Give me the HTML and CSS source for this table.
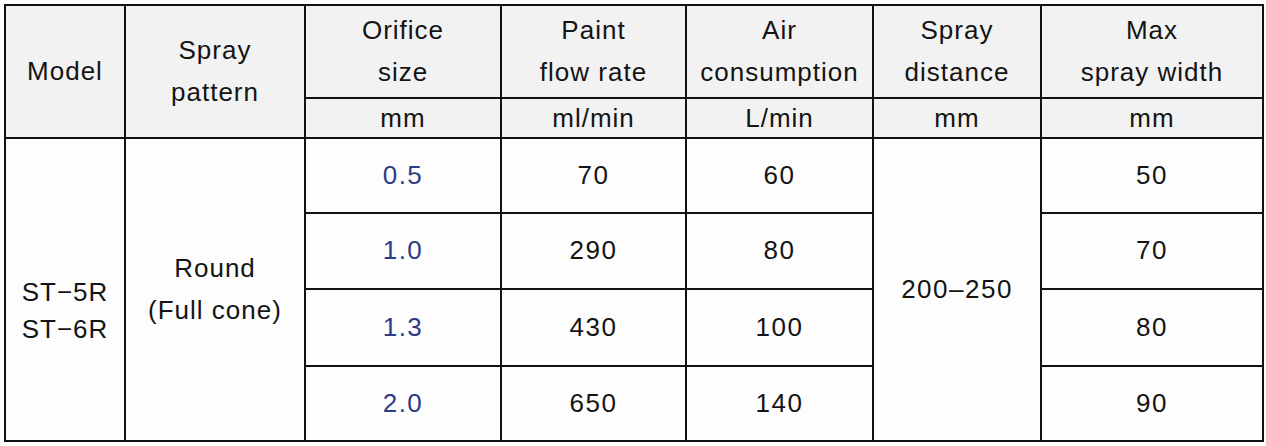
FILE: index.html
```html
<!DOCTYPE html>
<html lang="en">
<head>
<meta charset="utf-8">
<title>Spray nozzle specifications</title>
<link rel="stylesheet" href="styles.css">
</head>
<body>
<div class="wrap">
<table class="spec">
  <colgroup>
    <col class="c-model">
    <col class="c-pattern">
    <col class="c-orifice">
    <col class="c-flow">
    <col class="c-air">
    <col class="c-dist">
    <col class="c-width">
  </colgroup>
  <thead>
    <tr class="h-main">
      <th rowspan="2">Model</th>
      <th rowspan="2">Spray<br>pattern</th>
      <th>Orifice<br>size</th>
      <th>Paint<br>flow rate</th>
      <th>Air<br>consumption</th>
      <th>Spray<br>distance</th>
      <th>Max<br>spray width</th>
    </tr>
    <tr class="h-unit">
      <th>mm</th>
      <th>ml/min</th>
      <th>L/min</th>
      <th>mm</th>
      <th>mm</th>
    </tr>
  </thead>
  <tbody>
    <tr class="r1">
      <td rowspan="4" class="model">ST&minus;5R<br>ST&minus;6R</td>
      <td rowspan="4" class="pattern">Round<br>(Full cone)</td>
      <td class="num orifice">0.5</td>
      <td class="num">70</td>
      <td class="num">60</td>
      <td rowspan="4" class="num">200&ndash;250</td>
      <td class="num">50</td>
    </tr>
    <tr class="r2">
      <td class="num orifice">1.0</td>
      <td class="num">290</td>
      <td class="num">80</td>
      <td class="num">70</td>
    </tr>
    <tr class="r3">
      <td class="num orifice">1.3</td>
      <td class="num">430</td>
      <td class="num">100</td>
      <td class="num">80</td>
    </tr>
    <tr class="r4">
      <td class="num orifice">2.0</td>
      <td class="num">650</td>
      <td class="num">140</td>
      <td class="num">90</td>
    </tr>
  </tbody>
</table>
</div>
</body>
</html>
```
FILE: styles.css
```css
html, body {
  margin: 0;
  padding: 0;
  background: #ffffff;
}

.wrap {
  padding: 4px 0 0 4px;
}

.spec {
  border-collapse: collapse;
  table-layout: fixed;
  width: 1258px;
  font-family: "Liberation Sans", Arial, sans-serif;
  font-size: 26px;
  letter-spacing: 1px;
  color: #141414;
}

.c-model { width: 120px; }
.c-pattern { width: 180px; }
.c-orifice { width: 196px; }
.c-flow { width: 185px; }
.c-air { width: 187px; }
.c-dist { width: 168px; }
.c-width { width: 222px; }

.spec th,
.spec td {
  border: 2px solid #111111;
  padding: 0;
  text-align: center;
  vertical-align: middle;
  font-weight: normal;
}

.spec thead th {
  background: #f2f2f2;
  line-height: 42px;
  padding-bottom: 1px;
}

.spec .h-main { height: 93px; }
.spec .h-unit { height: 40px; }
.spec .h-unit th {
  line-height: 34px;
  padding-bottom: 0;
}

.spec tbody td {
  background: #fdfdfd;
  line-height: 42px;
  padding-bottom: 2px;
}

.spec td.num {
  letter-spacing: 1.5px;
}

.spec .r1 { height: 75px; }
.spec .r2 { height: 76px; }
.spec .r3 { height: 77px; }
.spec .r4 { height: 75px; }

.spec td.model {
  line-height: 37px;
  padding-top: 42px;
  padding-bottom: 0;
}

.spec td.orifice {
  color: #2d3b86;
}
```
